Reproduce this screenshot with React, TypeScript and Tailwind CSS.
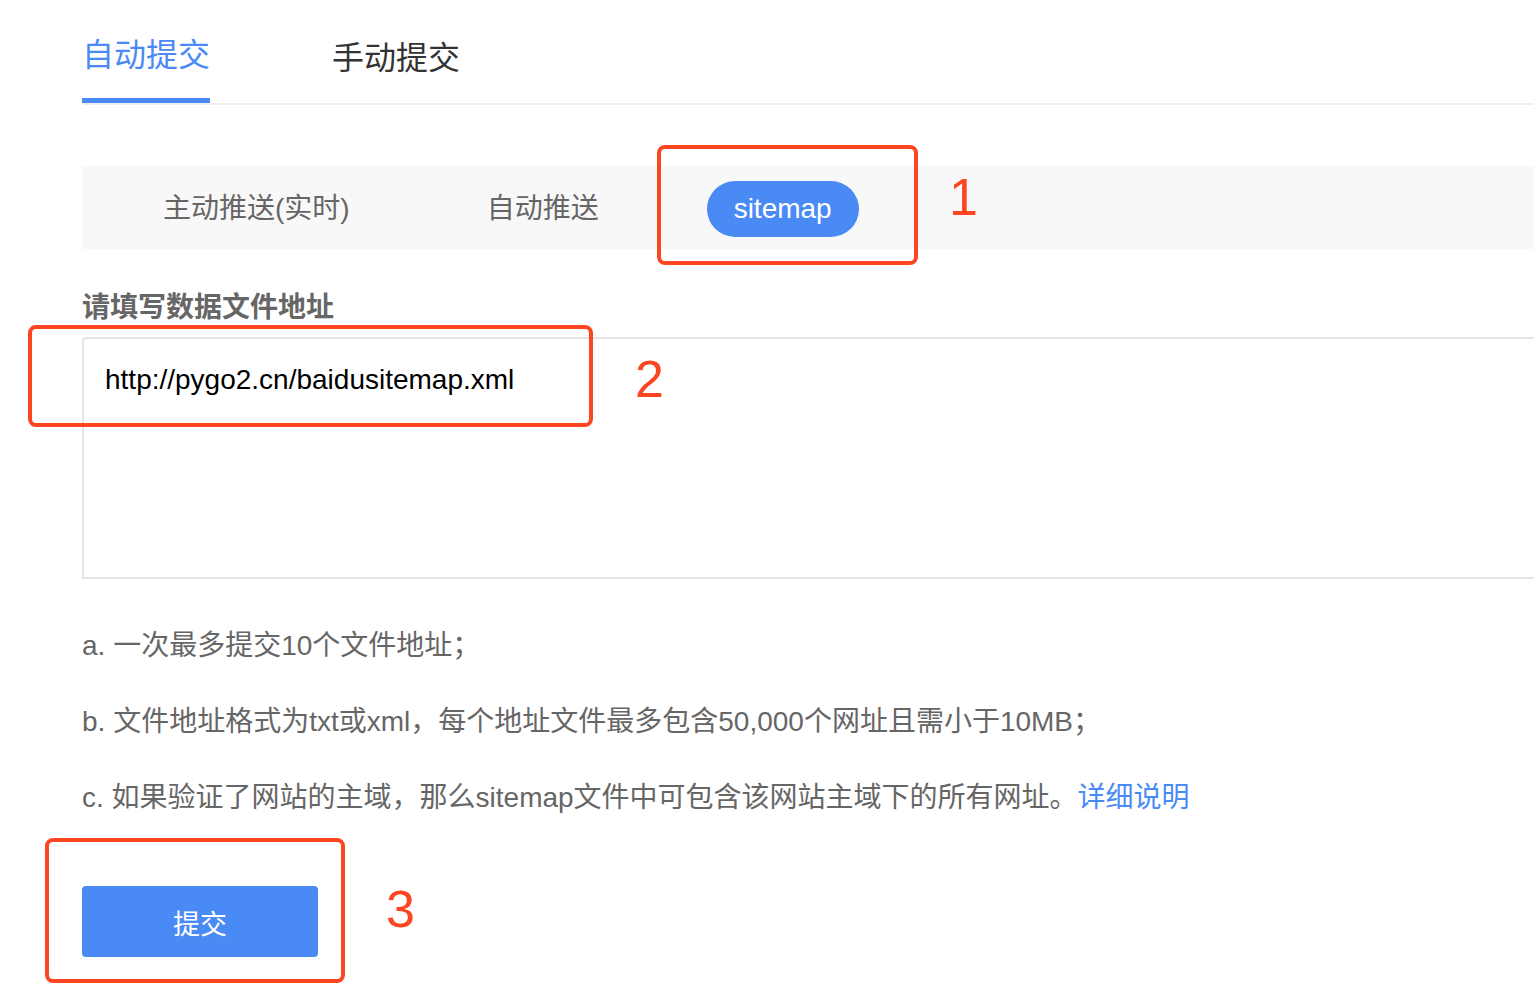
import React from "react";

const subTabs = ["主动推送(实时)", "自动推送"];

export default function App() {
  return (
    <div className="relative h-[994px] w-[1534px] overflow-hidden bg-white font-['Liberation_Sans','Noto_Sans_CJK_SC',sans-serif]">
      <div className="pl-[82px]">
        {/* top tabs */}
        <div className="flex h-[105px] border-b-2 border-[#eeeeee]">
          <div className="flex h-[103px] w-[128px] items-center border-b-[5px] border-[#4a8af5] pt-[12px] text-[32px] text-[#4a8af5]">
            自动提交
          </div>
          <div className="ml-[122px] flex h-[103px] items-center pt-[12px] text-[32px] text-[#333333]">
            手动提交
          </div>
        </div>

        {/* sub tabs */}
        <div className="mt-[61px] flex h-[83px] items-center bg-[#f8f8f8] pt-[2px] text-[28px] text-[#666666]">
          <span className="ml-[81px]">{subTabs[0]}</span>
          <span className="ml-[137px]">{subTabs[1]}</span>
          <span className="ml-[108px] flex h-[56px] w-[152px] items-center justify-center rounded-full bg-[#4a8af5] text-white">
            sitemap
          </span>
        </div>

        {/* label + textarea */}
        <div className="mt-[38px] text-[28px] font-bold leading-[42px] text-[#666666]">
          请填写数据文件地址
        </div>
        <div className="mt-[8px] h-[242px] w-[1520px] rounded-tl-[4px] border-2 border-[#e5e5e5] pl-[21px] pt-[20px] text-[28px] leading-[42px] text-black">
          http://pygo2.cn/baidusitemap.xml
        </div>

        {/* notes */}
        <div className="mt-[46px] flex flex-col gap-[34px] text-[28px] leading-[42px] text-[#666666]">
          <p>a. 一次最多提交10个文件地址；</p>
          <p>b. 文件地址格式为txt或xml，每个地址文件最多包含50,000个网址且需小于10MB；</p>
          <p>
            c. 如果验证了网站的主域，那么sitemap文件中可包含该网站主域下的所有网址。
            <span className="text-[#4a8af5]">详细说明</span>
          </p>
        </div>

        <button className="mt-[67px] flex h-[71px] w-[236px] items-center justify-center rounded-[4px] bg-[#4a8af5] pt-[8px] text-[27px] text-white">
          提交
        </button>
      </div>

      {/* red annotations */}
      <div className="absolute left-[657px] top-[145px] h-[120px] w-[261px] rounded-[8px] border-4 border-[#fc4622]" />
      <div className="absolute left-[949px] top-[171px] text-[52px] leading-none text-[#fc4622]">1</div>
      <div className="absolute left-[28px] top-[325px] h-[102px] w-[565px] rounded-[8px] border-4 border-[#fc4622]" />
      <div className="absolute left-[635px] top-[353px] text-[52px] leading-none text-[#fc4622]">2</div>
      <div className="absolute left-[45px] top-[838px] h-[145px] w-[300px] rounded-[8px] border-4 border-[#fc4622]" />
      <div className="absolute left-[386px] top-[883px] text-[52px] leading-none text-[#fc4622]">3</div>
    </div>
  );
}
